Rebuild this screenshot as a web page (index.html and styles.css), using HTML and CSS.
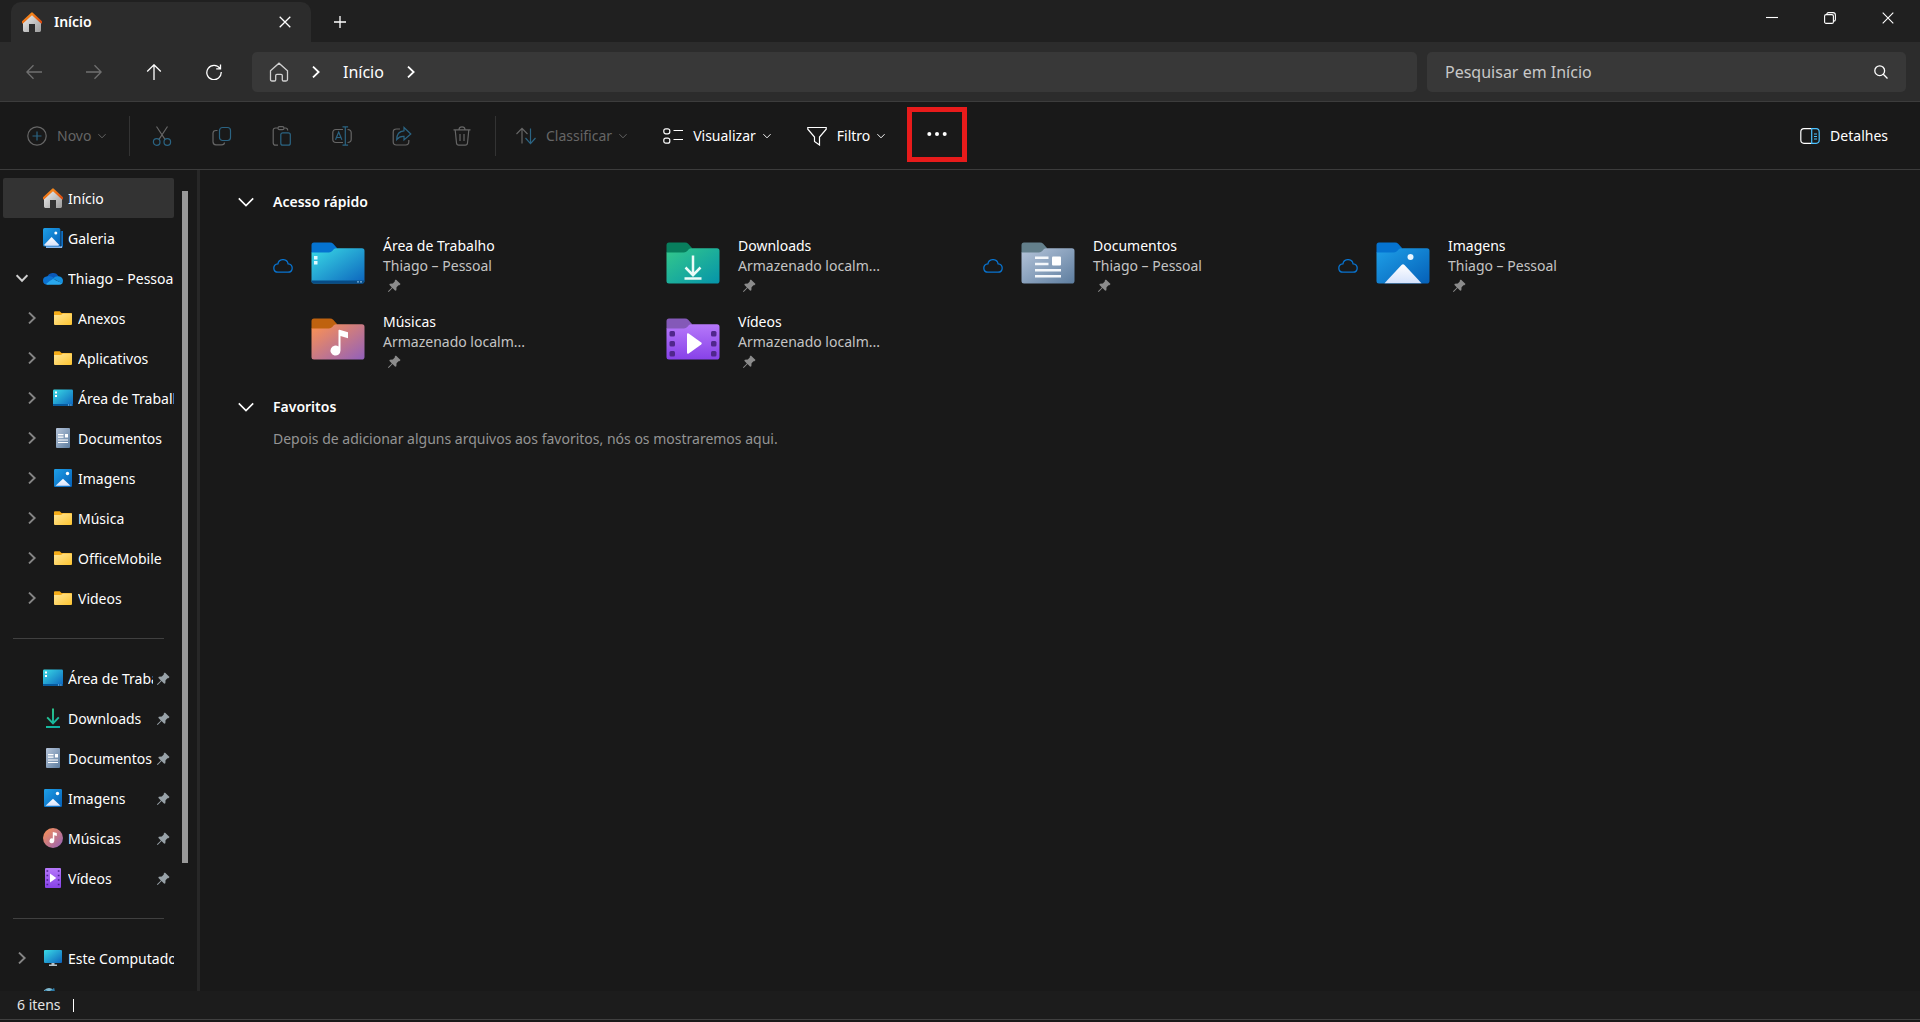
FILE: index.html
```html
<!DOCTYPE html>
<html lang="pt-BR">
<head>
<meta charset="utf-8">
<meta name="viewport" content="width=device-width, initial-scale=1">
<title>Início</title>
<link rel="stylesheet" href="styles.css">
</head>
<body>
<svg class="sprite" aria-hidden="true">
  <defs>
    <linearGradient id="g-roof" x1="0" y1="0" x2="1" y2="1"><stop offset="0" stop-color="#ff9a1f"/><stop offset="1" stop-color="#d9480f"/></linearGradient>
    <linearGradient id="g-wall" x1="0" y1="0" x2="1" y2="1"><stop offset="0" stop-color="#f2f2f2"/><stop offset="1" stop-color="#9c9c9c"/></linearGradient>
    <linearGradient id="g-blue" x1="0" y1="0" x2="1" y2="1"><stop offset="0" stop-color="#1ea0e8"/><stop offset="1" stop-color="#0560b8"/></linearGradient>
    <linearGradient id="g-desk" x1="0" y1="0" x2="1" y2="1"><stop offset="0" stop-color="#3adbe6"/><stop offset="1" stop-color="#0c63bd"/></linearGradient>
    <linearGradient id="g-yellow" x1="0" y1="0" x2="1" y2="1"><stop offset="0" stop-color="#ffe69a"/><stop offset="1" stop-color="#fdc42f"/></linearGradient>
    <linearGradient id="g-doc" x1="0" y1="0" x2="1" y2="1"><stop offset="0" stop-color="#b6c5da"/><stop offset="1" stop-color="#5d7d9f"/></linearGradient>
    <linearGradient id="g-green" x1="0" y1="0" x2="1" y2="1"><stop offset="0" stop-color="#34c98b"/><stop offset="1" stop-color="#0594aa"/></linearGradient>
    <linearGradient id="g-music" x1="0" y1="0" x2="1" y2="1"><stop offset="0" stop-color="#ff9350"/><stop offset="1" stop-color="#9160bb"/></linearGradient>
    <linearGradient id="g-video" x1="0" y1="0" x2="0" y2="1"><stop offset="0" stop-color="#b678fa"/><stop offset="1" stop-color="#8742e8"/></linearGradient>
    <linearGradient id="g-snow" x1="0" y1="0" x2="0" y2="1"><stop offset="0" stop-color="#ffffff"/><stop offset="1" stop-color="#d5e2fc"/></linearGradient>
    <linearGradient id="g-arrow" gradientUnits="userSpaceOnUse" x1="3" y1="0" x2="17" y2="20"><stop offset="0" stop-color="#34d08b"/><stop offset="1" stop-color="#0bada8"/></linearGradient>
  </defs>

  <symbol id="home-color" viewBox="0 0 20 20">
    <path d="M1 9.500 10 1.500l9 8v9.100q0 1.400-1.400 1.400H13v-8H7v8H2.400Q1 20 1 18.600z" fill="url(#g-wall)"/>
    <path d="M.7 10.200 10 1.600l9.300 8.600" fill="none" stroke="url(#g-roof)" stroke-width="2.400" stroke-linejoin="round" stroke-linecap="round"/>
  </symbol>
  <symbol id="home-line" viewBox="0 0 20 20">
    <path d="M1.500 8.800 10 1.200l8.500 7.600v8.700q0 1.500-1.500 1.500h-2.500q-1.200 0-1.200-1.200v-4.300q0-1.200-1.200-1.200H7.900q-1.200 0-1.200 1.200v4.300q0 1.200-1.200 1.200H3q-1.500 0-1.500-1.500z"/>
  </symbol>
  <symbol id="close" viewBox="0 0 12 12"><path d="m.7.700 10.600 10.600M11.300.7.700 11.300"/></symbol>
  <symbol id="plus" viewBox="0 0 12 12"><path d="M6 0v12M0 6h12"/></symbol>
  <symbol id="minimize" viewBox="0 0 12 12"><path d="M0 5.500h12"/></symbol>
  <symbol id="restore" viewBox="0 0 12 12"><rect x=".6" y="2.600" width="8.800" height="8.800" rx="1.500"/><path d="M2.800 2.300Q2.800.6 4.500.6H9q2.400 0 2.400 2.400v4.500q0 1.700-1.700 1.700"/></symbol>
  <symbol id="arrow-left" viewBox="0 0 16 16"><path d="M16 8H1M7.500 1.200.8 8l6.700 6.800"/></symbol>
  <symbol id="arrow-right" viewBox="0 0 16 16"><path d="M0 8h15M8.500 1.200 15.200 8l-6.700 6.800"/></symbol>
  <symbol id="arrow-up" viewBox="0 0 16 16"><path d="M8 16V1M1.200 7.500 8 .8l6.800 6.700"/></symbol>
  <symbol id="refresh" viewBox="0 0 16 16"><path d="M14 4.500A7.200 7.200 0 1 0 15.200 8M14.500.5v4.300h-4.300"/></symbol>
  <symbol id="chevron-right" viewBox="0 0 10 10"><path d="m2.500.5 4.700 4.500-4.700 4.500"/></symbol>
  <symbol id="chevron-down" viewBox="0 0 10 10"><path d="M.5 2.700 5 7.300l4.500-4.600"/></symbol>
  <symbol id="search" viewBox="0 0 14 14"><circle cx="5.700" cy="5.700" r="4.900"/><path d="m9.300 9.300 4.200 4.200"/></symbol>

  <symbol id="new" viewBox="0 0 20 20"><circle cx="10" cy="10" r="9.200"/><path class="accent" d="M10 5.500v9M5.500 10h9"/></symbol>
  <symbol id="cut" viewBox="0 0 20 20"><path d="M4.500.5 13 13.300M15.500.5 7 13.300"/><circle class="accent" cx="4.700" cy="16" r="3.300"/><circle class="accent" cx="15.300" cy="16" r="3.300"/></symbol>
  <symbol id="copy" viewBox="0 0 20 20"><path d="M5.500 4.500H4Q1 4.500 1 7.500v8.300q0 3 3 3h5.500q3 0 3-2.300"/><rect class="accent" x="7.500" y="1.500" width="11" height="13" rx="3"/></symbol>
  <symbol id="paste" viewBox="0 0 20 20"><path d="M6 2H3.500Q1.200 2 1.200 4.300v12.400Q1.200 19.200 3.700 19.200H6M12 2h1.500q2.200 0 2.200 2.500M6 2.200Q6 .7 7.500.7h3q1.500 0 1.500 1.500T10.500 3.700h-3Q6 3.700 6 2.200z"/><rect class="accent" x="8.800" y="6.800" width="9.500" height="12.400" rx="2"/></symbol>
  <symbol id="rename" viewBox="0 0 20 20"><path d="M11 3.500H4Q.8 3.500.8 6.700v6.600q0 3.200 3.200 3.200h7M15.500 3.500q3.700 0 3.700 3.200v6.600q0 3.200-3.700 3.200"/><path class="accent" d="M13.300 1v18M10.500.8h5.600M10.500 19.200h5.600M3.500 13.800 6.700 6l3.200 7.800M4.500 11.500h4.400"/></symbol>
  <symbol id="share" viewBox="0 0 20 20"><path d="M8 3H4.500Q1.200 3 1.200 6.200v9.600q0 3.200 3.200 3.200h9.200q3.200 0 3.200-3.200V14"/><path class="accent" d="M12 1.500 18.800 8 12 14v-3.600q-4.500-.4-7.300 3.200 0-8.300 7.300-8.800z"/></symbol>
  <symbol id="trash" viewBox="0 0 20 20"><path d="M1.500 3.800h17M7 3.500Q7.200.8 10 .8t3 2.700M3.200 4l1.300 13q.2 2.200 2.300 2.200h6.400q2.100 0 2.300-2.200l1.300-13M8 8v7M12 8v7"/></symbol>
  <symbol id="sort" viewBox="0 0 20 20"><path d="M6 17.500V2.500M.5 8 6 2.300 11.500 8"/><path class="accent" d="M14.500 2.500v15M9.500 12l5 5.700 5-5.700"/></symbol>
  <symbol id="view" viewBox="0 0 20 20"><rect x=".8" y="2.800" width="6" height="5" rx="2"/><rect x=".8" y="12.200" width="6" height="5" rx="2"/><path d="M10.500 4.500H20M10.500 13.500H20"/></symbol>
  <symbol id="filter" viewBox="0 0 20 20"><path d="M.8 1.500h18.400v1.700L12.500 11v8l-5-3.500V11L.8 3.200z"/></symbol>
  <symbol id="more" viewBox="0 0 20 20"><g fill="currentColor" stroke="none"><circle cx="2.300" cy="10" r="2"/><circle cx="10" cy="10" r="2"/><circle cx="17.700" cy="10" r="2"/></g></symbol>
  <symbol id="details" viewBox="0 0 20 20"><path d="M11.500 2.700H4Q.8 2.700.8 5.900v8.200q0 3.200 3.200 3.200h7.500"/><path class="accent" d="M11.700 2.700h4.500q3 0 3 3.200v8.200q0 3.200-3 3.200h-4.500zM14 8h3M14 10.500h3M14 13h3"/></symbol>

  <symbol id="gallery" viewBox="0 0 20 20">
    <path d="M4 3h16v15q0 2-2 2H4z" fill="#0d6fc4"/><path d="M3 18h16v2H3z" fill="#8ab9ee"/>
    <path d="M17.300 2.500h.9v16h-.9z" fill="#141d2a"/>
    <rect width="17.300" height="18.500" rx="1.500" fill="url(#g-blue)"/>
    <path d="m1 17 7.600-8 7.700 8q-.5.800-1.500.8H2.500Q1.500 17.800 1 17z" fill="url(#g-snow)"/><circle cx="12.800" cy="5" r="1.500" fill="#fff"/>
  </symbol>
  <symbol id="onedrive" viewBox="0 0 20 20">
    <path d="M4 9.500A6.200 6.200 0 0 1 15.500 8.500L10 13z" fill="#0a58b8"/>
    <path d="M4.500 8.200q4-1 7.500 3L5 16.800Q0 16.800 0 12.500q0-3.800 4.500-4.300z" fill="#0c72d0"/>
    <path d="M10 10.500q2-2.500 5.500-2.300Q20 9 20 12.800q0 1.500-.8 2.600z" fill="#1490df"/>
    <path d="M3 16q3.500-3.200 7-5l9.400 4.300q-1.300 1.500-3.400 1.500H5q-1.200 0-2-.8z" fill="#29a8ee"/>
  </symbol>
  <symbol id="folder" viewBox="0 0 20 20"><path d="M1 4.300Q1 3.300 2 3.300h4.700L8.500 5H18q1 0 1 1v4H1z" fill="#f6ad18"/><path d="M1 7h7l2-1.500h9v10.600q0 1-1 1H2q-1 0-1-1z" fill="url(#g-yellow)"/></symbol>
  <symbol id="desktop" viewBox="0 0 20 20"><rect y="1.500" width="20" height="16.500" rx="1.200" fill="url(#g-desk)"/><path d="M0 16h20v1q0 1-1 1H1q-1 0-1-1z" fill="#075a9e"/><path d="M2 3.500h2v2H2zM2 7h2v2H2z" fill="#fff"/><path d="M15 16.500h1.200v1H15zM17.300 16.500h1.200v1h-1.200z" fill="#9bd2ff"/></symbol>
  <symbol id="document" viewBox="0 0 20 20"><rect x="3" width="14" height="20" rx="1" fill="url(#g-doc)"/><path d="M5 6.700h5.500M5 9.200h5.500M5 12h10M5 14.500h10" stroke="#fff" stroke-width="1.200"/><path d="M12 6h3v3.500h-3z" fill="#fff"/></symbol>
  <symbol id="picture" viewBox="0 0 20 20"><rect x="1" y="1" width="18" height="18" rx="1.200" fill="url(#g-blue)"/><path d="m2.500 17.700 7.500-7 7.500 7z" fill="url(#g-snow)"/><circle cx="14.500" cy="5.500" r="1.700" fill="#fff"/></symbol>
  <symbol id="download" viewBox="0 0 20 20"><path d="M10 .5v14.300M4.200 9.300l5.800 6 5.800-6M3 19h14" fill="none" stroke="url(#g-arrow)" stroke-width="1.900"/></symbol>
  <symbol id="music" viewBox="0 0 20 20"><circle cx="10" cy="10" r="10" fill="url(#g-music)"/><path d="M9.800 4l4 1v3l-2.500-.7v5.500a2.400 2.400 0 1 1-1.500-2.200z" fill="#fff"/></symbol>
  <symbol id="video" viewBox="0 0 20 20"><rect x="2" width="16" height="20" rx="1" fill="url(#g-video)"/><path d="M3.500 3h1.700M3.500 7.500h1.700M3.500 12h1.700M3.500 16.500h1.700M14.800 3h1.700M14.800 7.500h1.700M14.800 12h1.700M14.800 16.500h1.700" stroke="#49208f" stroke-width="1.700"/><path d="m7 5.500 6.300 4.500L7 14.500z" fill="#fff"/></symbol>
  <symbol id="computer" viewBox="0 0 20 20"><rect x="1" y="2" width="18" height="13" rx="1" fill="url(#g-desk)"/><path d="M8.500 15h3v1.500H14V18H6v-1.500h2.500z" fill="#b8c3ca"/></symbol>
  <symbol id="network" viewBox="0 0 20 20"><circle cx="6" cy="6" r="6" fill="#7fb8cf"/><path d="M2 2.500 6 5l4.500-3.500 1 4.500" fill="none" stroke="#2b7aa6" stroke-width="2"/></symbol>
  <symbol id="pin" viewBox="0 0 14 14"><path d="M8.500.5 13.500 5.400 12.300 6.600 11.300 6.700 9.200 8.900 9 12 7.800 12.700 4.900 9.800 1 13.700 0 14 .3 13 4.200 9.100 1.400 6.200 2 5.100 5.200 4.900 7.300 2.700 7.300 1.700z" fill="currentColor"/></symbol>
  <symbol id="cloud" viewBox="0 0 20 14"><path d="M4.900 4.800A5.200 5.200 0 0 1 15.100 4.800Q19.200 5.200 19.200 9.100 19.200 13.200 15 13.200H5Q.8 13.200.8 9.100.8 5.200 4.900 4.800z"/></symbol>

  <symbol id="folder-desktop" viewBox="0 0 54 42">
    <path d="M.5 3q0-2.500 2.500-2.500h16q2 0 3.200 1.200L26 6l-3 5H.5z" fill="#0573d0"/>
    <path d="M.5 10.500H18q2 0 3.500-1.800L23 7q1-.8 2.500-.8H51q2.500 0 2.500 2.500v30Q53.500 41.500 51 41.500H3Q.5 41.500.5 39z" fill="url(#g-desk)"/>
    <path d="M.5 38.500h53Q53.500 41.500 51 41.500H3Q.5 41.500.5 38.500z" fill="#084c86"/>
    <path d="M3 14h3.500v3.500H3zM3 19h3.500v3.500H3z" fill="#dffaff"/><path d="M46 39.200h2v1.300h-2zM49 39.200h2v1.300h-2z" fill="#7cb3dd"/>
  </symbol>
  <symbol id="folder-download" viewBox="0 0 54 42">
    <path d="M.5 3q0-2.500 2.500-2.500h16q2 0 3.200 1.200L26 6l-3 5H.5z" fill="#087e5d"/>
    <path d="M.5 10.500H18q2 0 3.500-1.800L23 7q1-.8 2.500-.8H51q2.500 0 2.500 2.500v30Q53.500 41.500 51 41.500H3Q.5 41.500.5 39z" fill="url(#g-green)"/>
    <path d="M27 13.500v19.300M19.500 25.500l7.500 7.600 7.500-7.600M18.500 36.500h17" fill="none" stroke="#ecfbf7" stroke-width="2.500"/>
  </symbol>
  <symbol id="folder-document" viewBox="0 0 54 42">
    <path d="M.5 3q0-2.500 2.500-2.500h16q2 0 3.200 1.200L26 6l-3 5H.5z" fill="#637f8b"/>
    <path d="M.5 10.500H18q2 0 3.500-1.800L23 7q1-.8 2.500-.8H51q2.500 0 2.500 2.500v30Q53.500 41.500 51 41.500H3Q.5 41.500.5 39z" fill="url(#g-doc)"/>
    <path d="M14 15.700h13.500M14 22h13.500M14 28.200h26M14 34.300h26" stroke="#f4f7fb" stroke-width="2.600"/><rect x="31" y="14.500" width="9" height="9" rx="1" fill="#fff"/>
  </symbol>
  <symbol id="folder-picture" viewBox="0 0 54 42">
    <path d="M.5 3q0-2.500 2.500-2.500h16q2 0 3.200 1.200L26 6l-3 5H.5z" fill="#0573d0"/>
    <path d="M.5 10.500H18q2 0 3.500-1.800L23 7q1-.8 2.500-.8H51q2.500 0 2.500 2.500v30Q53.500 41.500 51 41.500H3Q.5 41.500.5 39z" fill="url(#g-blue)"/>
    <path d="M8.500 41.300 25.500 23q1.500-1.500 3 0l17 18.300z" fill="url(#g-snow)"/><circle cx="34.500" cy="15" r="3" fill="#e9f6ff"/>
  </symbol>
  <symbol id="folder-music" viewBox="0 0 54 42">
    <path d="M.5 3q0-2.500 2.500-2.500h16q2 0 3.200 1.200L26 6l-3 5H.5z" fill="#bf620f"/>
    <path d="M.5 10.500H18q2 0 3.500-1.800L23 7q1-.8 2.500-.8H51q2.500 0 2.500 2.500v30Q53.500 41.500 51 41.500H3Q.5 41.500.5 39z" fill="url(#g-music)"/>
    <path d="M27.500 12.500q0-1 1-.8l8.500 2.500v6L29.500 18v14.500a5 5 0 1 1-2-4z" fill="#fff"/>
  </symbol>
  <symbol id="folder-video" viewBox="0 0 54 42">
    <path d="M.5 3q0-2.500 2.500-2.500h16q2 0 3.200 1.200L26 6l-3 5H.5z" fill="#8459b8"/>
    <path d="M.5 10.500H18q2 0 3.500-1.800L23 7q1-.8 2.500-.8H51q2.500 0 2.500 2.500v30Q53.500 41.500 51 41.500H3Q.5 41.500.5 39z" fill="url(#g-video)"/>
    <g fill="#50278c"><rect x="3.500" y="13" width="5.500" height="5.500" rx="1.500"/><rect x="3.500" y="23" width="5.500" height="5.500" rx="1.500"/><rect x="3.500" y="33" width="5.500" height="5.500" rx="1.500"/><rect x="45" y="13" width="5.500" height="5.500" rx="1.500"/><rect x="45" y="23" width="5.500" height="5.500" rx="1.500"/><rect x="45" y="33" width="5.500" height="5.500" rx="1.500"/></g>
    <path d="M21 16.500q0-2 1.700-1l12.500 9q1.200 1 0 2l-12.500 9q-1.700 1-1.700-1z" fill="#fff"/>
  </symbol>
</svg>

<div class="window">
  <header class="titlebar">
    <div class="tab">
      <svg class="icon-20"><use href="#home-color"/></svg>
      <span class="tab-title">Início</span>
      <button class="tab-close" aria-label="Fechar guia"><svg class="line icon-12"><use href="#close"/></svg></button>
    </div>
    <button class="tab-new" aria-label="Nova guia"><svg class="line icon-12"><use href="#plus"/></svg></button>
    <div class="window-controls">
      <button aria-label="Minimizar"><svg class="line icon-12"><use href="#minimize"/></svg></button>
      <button aria-label="Restaurar"><svg class="line icon-12"><use href="#restore"/></svg></button>
      <button aria-label="Fechar"><svg class="line icon-12"><use href="#close"/></svg></button>
    </div>
  </header>

  <div class="navbar">
    <div class="nav-buttons">
      <button disabled aria-label="Voltar"><svg class="line icon-16"><use href="#arrow-left"/></svg></button>
      <button disabled aria-label="Avançar"><svg class="line icon-16"><use href="#arrow-right"/></svg></button>
      <button aria-label="Acima"><svg class="line icon-16"><use href="#arrow-up"/></svg></button>
      <button aria-label="Atualizar"><svg class="line icon-16"><use href="#refresh"/></svg></button>
    </div>
    <nav class="address" aria-label="Caminho">
      <svg class="line icon-20"><use href="#home-line"/></svg>
      <svg class="line bold icon-12"><use href="#chevron-right"/></svg>
      <a href="#">Início</a>
      <svg class="line bold icon-12"><use href="#chevron-right"/></svg>
    </nav>
    <label class="search">
      <input type="search" placeholder="Pesquisar em Início" aria-label="Pesquisar em Início">
      <svg class="line icon-14"><use href="#search"/></svg>
    </label>
  </div>

  <div class="toolbar" role="toolbar" aria-label="Comandos">
    <button class="command new" disabled><svg class="line icon-20"><use href="#new"/></svg><span>Novo</span><svg class="line caret"><use href="#chevron-down"/></svg></button>
    <span class="divider"></span>
    <div class="actions">
      <button disabled aria-label="Recortar"><svg class="line icon-20"><use href="#cut"/></svg></button>
      <button disabled aria-label="Copiar"><svg class="line icon-20"><use href="#copy"/></svg></button>
      <button disabled aria-label="Colar"><svg class="line icon-20"><use href="#paste"/></svg></button>
      <button disabled aria-label="Renomear"><svg class="line icon-20"><use href="#rename"/></svg></button>
      <button disabled aria-label="Compartilhar"><svg class="line icon-20"><use href="#share"/></svg></button>
      <button disabled aria-label="Excluir"><svg class="line icon-20"><use href="#trash"/></svg></button>
    </div>
    <span class="divider"></span>
    <div class="menus">
      <button class="command" disabled><svg class="line icon-20"><use href="#sort"/></svg><span>Classificar</span><svg class="line caret"><use href="#chevron-down"/></svg></button>
      <button class="command"><svg class="line icon-20"><use href="#view"/></svg><span>Visualizar</span><svg class="line caret"><use href="#chevron-down"/></svg></button>
      <button class="command"><svg class="line icon-20"><use href="#filter"/></svg><span>Filtro</span><svg class="line caret"><use href="#chevron-down"/></svg></button>
    </div>
    <button class="more" aria-label="Ver mais"><svg class="icon-20"><use href="#more"/></svg></button>
    <button class="command details"><svg class="line icon-20"><use href="#details"/></svg><span>Detalhes</span></button>
  </div>

  <div class="body">
    <aside class="sidebar">
      <nav class="tree" aria-label="Painel de navegação">
        <ul>
          <li><a class="row selected" href="#"><span class="twist"></span><svg class="icon-20"><use href="#home-color"/></svg><span class="label">Início</span></a></li>
          <li><a class="row" href="#"><span class="twist"></span><svg class="icon-20"><use href="#gallery"/></svg><span class="label">Galeria</span></a></li>
          <li><a class="row open" href="#"><svg class="line twist"><use href="#chevron-down"/></svg><svg class="icon-20"><use href="#onedrive"/></svg><span class="label">Thiago – Pessoal</span></a>
            <ul class="children">
              <li><a class="row" href="#"><svg class="line twist"><use href="#chevron-right"/></svg><svg class="icon-20"><use href="#folder"/></svg><span class="label">Anexos</span></a></li>
              <li><a class="row" href="#"><svg class="line twist"><use href="#chevron-right"/></svg><svg class="icon-20"><use href="#folder"/></svg><span class="label">Aplicativos</span></a></li>
              <li><a class="row" href="#"><svg class="line twist"><use href="#chevron-right"/></svg><svg class="icon-20"><use href="#desktop"/></svg><span class="label">Área de Trabalho</span></a></li>
              <li><a class="row" href="#"><svg class="line twist"><use href="#chevron-right"/></svg><svg class="icon-20"><use href="#document"/></svg><span class="label">Documentos</span></a></li>
              <li><a class="row" href="#"><svg class="line twist"><use href="#chevron-right"/></svg><svg class="icon-20"><use href="#picture"/></svg><span class="label">Imagens</span></a></li>
              <li><a class="row" href="#"><svg class="line twist"><use href="#chevron-right"/></svg><svg class="icon-20"><use href="#folder"/></svg><span class="label">Música</span></a></li>
              <li><a class="row" href="#"><svg class="line twist"><use href="#chevron-right"/></svg><svg class="icon-20"><use href="#folder"/></svg><span class="label">OfficeMobile</span></a></li>
              <li><a class="row" href="#"><svg class="line twist"><use href="#chevron-right"/></svg><svg class="icon-20"><use href="#folder"/></svg><span class="label">Videos</span></a></li>
            </ul>
          </li>
        </ul>
        <hr>
        <ul>
          <li><a class="row pinned" href="#"><span class="twist"></span><svg class="icon-20"><use href="#desktop"/></svg><span class="label">Área de Trabalho</span><svg class="pin"><use href="#pin"/></svg></a></li>
          <li><a class="row pinned" href="#"><span class="twist"></span><svg class="icon-20"><use href="#download"/></svg><span class="label">Downloads</span><svg class="pin"><use href="#pin"/></svg></a></li>
          <li><a class="row pinned" href="#"><span class="twist"></span><svg class="icon-20"><use href="#document"/></svg><span class="label">Documentos</span><svg class="pin"><use href="#pin"/></svg></a></li>
          <li><a class="row pinned" href="#"><span class="twist"></span><svg class="icon-20"><use href="#picture"/></svg><span class="label">Imagens</span><svg class="pin"><use href="#pin"/></svg></a></li>
          <li><a class="row pinned" href="#"><span class="twist"></span><svg class="icon-20"><use href="#music"/></svg><span class="label">Músicas</span><svg class="pin"><use href="#pin"/></svg></a></li>
          <li><a class="row pinned" href="#"><span class="twist"></span><svg class="icon-20"><use href="#video"/></svg><span class="label">Vídeos</span><svg class="pin"><use href="#pin"/></svg></a></li>
        </ul>
        <hr>
        <ul>
          <li><a class="row" href="#"><svg class="line twist"><use href="#chevron-right"/></svg><svg class="icon-20"><use href="#computer"/></svg><span class="label">Este Computador</span></a></li>
          <li><a class="row" href="#" aria-label="Rede"><span class="twist"></span><svg class="icon-20"><use href="#network"/></svg></a></li>
        </ul>
      </nav>
      <div class="scrollbar"><div class="thumb"></div></div>
    </aside>

    <main class="content">
      <section>
        <h2><button class="group"><svg class="line icon-16"><use href="#chevron-down"/></svg>Acesso rápido</button></h2>
        <div class="tiles">
          <a class="tile" href="#"><svg class="line cloud"><use href="#cloud"/></svg><svg class="folder"><use href="#folder-desktop"/></svg><span class="info"><span class="name">Área de Trabalho</span><span class="place">Thiago – Pessoal</span><svg class="pin"><use href="#pin"/></svg></span></a>
          <a class="tile" href="#"><span class="cloud"></span><svg class="folder"><use href="#folder-download"/></svg><span class="info"><span class="name">Downloads</span><span class="place">Armazenado localm...</span><svg class="pin"><use href="#pin"/></svg></span></a>
          <a class="tile" href="#"><svg class="line cloud"><use href="#cloud"/></svg><svg class="folder"><use href="#folder-document"/></svg><span class="info"><span class="name">Documentos</span><span class="place">Thiago – Pessoal</span><svg class="pin"><use href="#pin"/></svg></span></a>
          <a class="tile" href="#"><svg class="line cloud"><use href="#cloud"/></svg><svg class="folder"><use href="#folder-picture"/></svg><span class="info"><span class="name">Imagens</span><span class="place">Thiago – Pessoal</span><svg class="pin"><use href="#pin"/></svg></span></a>
          <a class="tile" href="#"><span class="cloud"></span><svg class="folder"><use href="#folder-music"/></svg><span class="info"><span class="name">Músicas</span><span class="place">Armazenado localm...</span><svg class="pin"><use href="#pin"/></svg></span></a>
          <a class="tile" href="#"><span class="cloud"></span><svg class="folder"><use href="#folder-video"/></svg><span class="info"><span class="name">Vídeos</span><span class="place">Armazenado localm...</span><svg class="pin"><use href="#pin"/></svg></span></a>
        </div>
      </section>
      <section>
        <h2><button class="group"><svg class="line icon-16"><use href="#chevron-down"/></svg>Favoritos</button></h2>
        <p class="empty">Depois de adicionar alguns arquivos aos favoritos, nós os mostraremos aqui.</p>
      </section>
    </main>
  </div>

  <footer class="statusbar"><span>6 itens</span><span class="status-divider"></span></footer>
</div>
</body>
</html>
```

FILE: styles.css
```css
* {
  box-sizing: border-box;
}

body {
  margin: 0;
  background: #191919;
  color: #fff;
  font: 14px/20px "Noto Sans", "Open Sans", sans-serif;
}

button {
  display: flex;
  align-items: center;
  justify-content: center;
  padding: 0;
  border: 0;
  background: none;
  color: inherit;
  font: inherit;
}

a {
  color: inherit;
  text-decoration: none;
}

ul {
  margin: 0;
  padding: 0;
  list-style: none;
}

svg {
  display: block;
  flex: none;
}

.sprite {
  position: absolute;
  width: 0;
  height: 0;
}

.line {
  fill: none;
  stroke: currentColor;
  stroke-width: 1.3;
}

.bold {
  stroke-width: 1.5;
}

.accent {
  stroke: var(--accent, #4cc2ff);
}

.icon-12 { width: 12px; height: 12px; }
.icon-14 { width: 14px; height: 14px; }
.icon-16 { width: 16px; height: 16px; }
.icon-20 { width: 20px; height: 20px; }

.window {
  display: flex;
  flex-direction: column;
  height: 100vh;
  padding-bottom: 2px;
}

/* Title bar */
.titlebar {
  display: flex;
  flex: none;
  height: 42px;
  padding: 2px 3px 0 11px;
  background: #202020;
}

.tab {
  display: flex;
  align-items: center;
  gap: 12px;
  width: 300px;
  padding: 0 12px 0 11px;
  border-radius: 10px 10px 0 0;
  background: #2c2c2c;
}

.tab-title {
  flex: 1;
  font-weight: 600;
}

.tab-close {
  width: 28px;
  height: 28px;
}

.tab-new {
  width: 36px;
  margin-left: 11px;
}

.window-controls {
  display: flex;
  margin-left: auto;
}

.window-controls button {
  width: 58px;
  height: 32px;
}

.window-controls .icon-12 {
  stroke-width: 1.1;
}

/* Navigation bar */
.navbar {
  display: grid;
  flex: none;
  grid-template-columns: 248px 1165fr 489fr;
  align-items: center;
  height: 60px;
  padding: 0 14px 0 4px;
  border-bottom: 1px solid #3c3c3c;
  background: #2c2c2c;
}

.nav-buttons {
  display: flex;
}

.nav-buttons button {
  flex: none;
  width: 60px;
  height: 40px;
}

button:disabled {
  color: #707070;
}

.address {
  display: flex;
  align-items: center;
  gap: 21px;
  height: 40px;
  padding: 0 17px;
  border-radius: 5px;
  background: #383838;
  font-size: 16px;
}

.address .icon-20 {
  stroke: #d0d0d0;
}

.search {
  display: flex;
  align-items: center;
  height: 40px;
  margin-left: 10px;
  padding: 0 18px;
  border-radius: 5px;
  background: #383838;
}

.search input {
  flex: 1;
  min-width: 0;
  padding: 0;
  border: 0;
  outline: 0;
  background: none;
  color: #fff;
  font: 16px/20px "Noto Sans", "Open Sans", sans-serif;
}

.search input::placeholder {
  color: #c8c8c8;
  opacity: 1;
}

/* Command bar */
.toolbar {
  display: flex;
  flex: none;
  align-items: center;
  height: 68px;
  padding: 1px 32px 0 27px;
  border-bottom: 1px solid #3c3c3c;
}

.toolbar .line {
  stroke-width: 1.2;
}

.toolbar button:disabled {
  color: #666;
}

.toolbar button:disabled .line {
  --accent: #2b6483;
}

.command {
  gap: 10px;
  height: 40px;
}

.command .caret {
  width: 8px;
  height: 8px;
  margin-left: -3px;
}

.new {
  justify-content: flex-start;
  width: 81px;
}

.divider {
  width: 1px;
  height: 40px;
  margin-left: 21px;
  background: #333;
}

.actions {
  display: flex;
  margin-left: 2px;
}

.actions button {
  width: 60px;
  height: 40px;
}

.actions + .divider {
  margin-left: 3px;
}

.menus {
  display: flex;
  gap: 36px;
  margin-left: 20px;
}

.more {
  width: 60px;
  height: 55px;
  margin: 0 0 4px 22px;
  border: 5px solid #e81b1b;
}

.details {
  margin-left: auto;
}

/* Body */
.body {
  display: flex;
  flex: 1;
  min-height: 0;
}

.sidebar {
  display: flex;
  flex: none;
  width: 200px;
  border-right: 3px solid #272727;
}

.tree {
  width: 174px;
  padding: 8px 0 0 3px;
  overflow: hidden;
}

.row {
  display: flex;
  align-items: center;
  height: 40px;
  padding-left: 13px;
  border-radius: 2px;
}

.selected {
  background: #333;
}

.twist {
  flex: none;
  width: 12px;
  height: 12px;
  margin-right: 15px;
  color: #858585;
  stroke-width: 1.6;
}

.open .twist {
  color: #d0d0d0;
}

.children .row {
  padding-left: 23px;
}

.label {
  flex: 1;
  margin-left: 5px;
  padding-top: 2px;
  overflow: hidden;
  white-space: nowrap;
}

.pinned {
  padding-right: 4px;
}

.pin {
  width: 13px;
  height: 13px;
  margin-left: 4px;
  color: #98a2a8;
}

.tree hr {
  margin: 20px 10px 19px;
  border: 0;
  border-top: 1px solid #404040;
}

.scrollbar {
  padding: 21px 0 0 8px;
}

.thumb {
  width: 6px;
  height: 84%;
  background: #999;
}

.content {
  flex: 1;
  padding: 22px 0 0 38px;
}

h2 {
  margin: 0;
  font-size: 14px;
}

.group {
  gap: 19px;
  height: 20px;
  font-weight: 600;
}

.group .line {
  stroke-width: 1;
}

.tiles {
  display: grid;
  grid-template-columns: repeat(auto-fill, 355px);
  row-gap: 16px;
  margin: 24px 0 25px 35px;
}

.tile {
  display: flex;
  align-items: center;
  height: 60px;
}

.cloud {
  width: 20px;
  height: 14px;
  margin-right: 18px;
  color: #0873cf;
}

.folder {
  width: 54px;
  height: 42px;
  margin: 0 18px 6px 0;
}

.info {
  display: flex;
  flex-direction: column;
}

.place {
  color: #c4c4c4;
}

.info .pin {
  margin: 3px 5px 4px;
  color: #8c8c8c;
}

.empty {
  margin: 12px 0 0 35px;
  color: #949494;
}

/* Status bar */
.statusbar {
  display: flex;
  flex: none;
  align-items: center;
  gap: 12px;
  height: 29px;
  padding-left: 17px;
  border-bottom: 1px solid #404040;
  background: #1c1c1c;
  color: #e4e4e4;
}

.status-divider {
  width: 1px;
  height: 13px;
  background: #fff;
}
```
